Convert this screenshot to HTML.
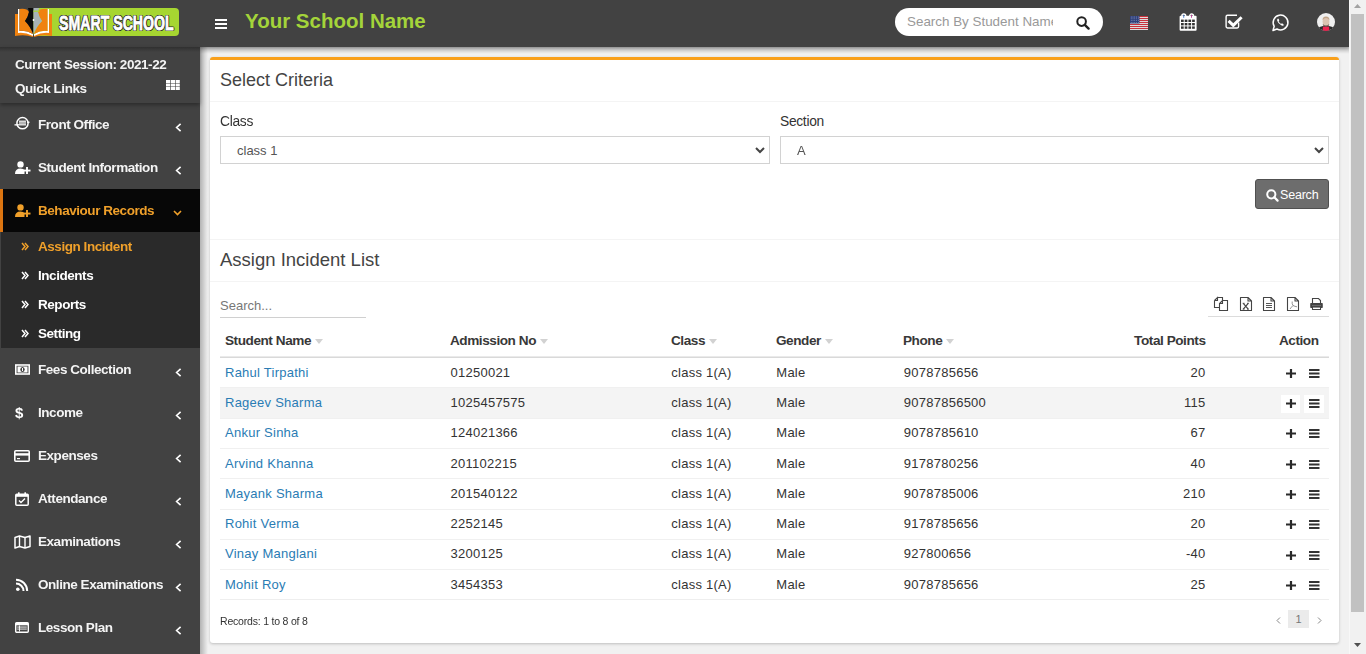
<!DOCTYPE html>
<html><head><meta charset="utf-8"><style>
*{box-sizing:border-box;margin:0;padding:0}
html,body{width:1366px;height:654px;overflow:hidden;background:#f1f1f1;font-family:"Liberation Sans",sans-serif;color:#333}
#hdr{position:absolute;left:0;top:0;width:1349px;height:47px;background:#424242;box-shadow:0 1px 4px rgba(0,0,0,.35)}
#side{position:absolute;left:0;top:47px;width:200px;height:607px;background:#424242;overflow:hidden}
#content{position:absolute;left:200px;top:47px;width:1149px;height:607px;background:#f1f1f1}
#sb{position:absolute;left:1349px;top:0;width:17px;height:654px;background:#f1f1f1}
#thumb{position:absolute;left:2px;top:14px;width:13px;height:598px;background:#c1c1c1}
.t{position:absolute;white-space:nowrap;line-height:1}
svg{position:absolute;overflow:visible}
.menu{position:absolute;left:0;width:200px;height:43px;will-change:transform}
.menu .lbl{position:absolute;left:38px;top:0;line-height:43px;font-size:13.5px;font-weight:700;color:#f4f4f4;letter-spacing:-0.45px;white-space:nowrap}
.sub{position:absolute;left:0;width:200px;height:29px;will-change:transform}
.sub .lbl{position:absolute;left:38px;top:0;line-height:29px;font-size:13.5px;font-weight:700;color:#f4f4f4;letter-spacing:-0.45px;white-space:nowrap}
#box{position:absolute;left:210px;top:57px;width:1129px;height:586px;background:#fff;border-top:3px solid #f9a01b;border-radius:3px;box-shadow:0 1px 3px rgba(0,0,0,.22)}
.hl{position:absolute;left:210px;width:1129px;height:1px;background:#f4f4f4}
.sel{position:absolute;top:136px;height:28px;border:1px solid #d2d2d2;background:#fff}
.th{position:absolute;font-size:13.6px;font-weight:700;color:#383838;letter-spacing:-0.45px;white-space:nowrap;line-height:1}
.row{position:absolute;left:220px;width:1109px;border-top:1px solid #f0f0f0}
.row.s{background:#f4f4f4}
.c{position:absolute;font-size:13px;color:#333;white-space:nowrap;line-height:1;letter-spacing:.25px}
.c.a{color:#2a7cb4}
</style></head><body>
<div id="side"></div>
<div id="content"></div>
<div style="position:absolute;left:200px;top:47px;width:1149px;height:7px;background:linear-gradient(rgba(0,0,0,.2),rgba(0,0,0,0))"></div>
<div style="position:absolute;left:200px;top:47px;width:8px;height:607px;background:linear-gradient(90deg,rgba(0,0,0,.26),rgba(0,0,0,0))"></div>
<div id="box"></div>
<div id="hdr"></div>
<div id="sb"><div id="thumb"></div></div>
<div style="position:absolute;left:33px;top:8px;width:146px;height:28px;background:#a6d631;border-radius:4px"></div>
<svg style="left:15px;top:8px" width="37" height="29" viewBox="0 0 37 29">
<path d="M0 6 L3 6 L3 24 Q10 23 18 27 L18 29 Q10 26 0 28 Z" fill="#f0820f"/>
<path d="M37 6 L34 6 L34 24 Q27 23 19 27 L19 29 Q27 26 37 28 Z" fill="#f0820f"/>
<path d="M3 1 L3 25 Q10 24 18 28 L18 26 Q11 22 4.5 23 L4.5 1 Z" fill="#fff"/>
<path d="M34 1 L34 25 Q27 24 19 28 L19 26 Q26 22 32.5 23 L32.5 1 Z" fill="#fff"/>
<path d="M4.5 1 Q12 0 14 4 Q13 9 10 13 Q15 18 18 26 Q11 22 4.5 23 Z" fill="#f0820f"/>
<path d="M32.5 1 Q25 0 23 4 Q24 9 27 13 Q22 18 19 26 Q26 22 32.5 23 Z" fill="#f0820f"/>
<path d="M13 0 L18.5 0 L18.5 26 Q15 18 10 13 Q13 9 14 4 Z" fill="#0a0a0a"/>
<path d="M18.5 0 L24 0 L23 4 Q24 9 27 13 Q22 18 18.5 26 Z" fill="#a8b2b7"/>
<rect x="18.5" y="2.6" width="6" height="1.2" fill="#a6d631"/>
<circle cx="18.5" cy="12" r="0.9" fill="#fff"/>
</svg>
<div class="t" style="left:58.5px;top:13px;font-size:20.5px;font-weight:700;color:#fff;-webkit-text-stroke:0.8px #fff;transform:scaleX(0.69);transform-origin:0 0;letter-spacing:0px;text-shadow:1.3px 0 0 #2a2a2a,-1.3px 0 0 #2a2a2a,0 1.3px 0 #2a2a2a,0 -1.3px 0 #2a2a2a,1px 1px 0 #2a2a2a,-1px -1px 0 #2a2a2a,1px -1px 0 #2a2a2a,-1px 1px 0 #2a2a2a">SMART SCHOOL</div>
<div style="position:absolute;left:215px;top:18.5px;width:12px;height:2px;background:#fff"></div>
<div style="position:absolute;left:215px;top:22.5px;width:12px;height:2px;background:#fff"></div>
<div style="position:absolute;left:215px;top:26.5px;width:12px;height:2px;background:#fff"></div>
<div class="t" style="left:245px;top:11.05px;font-size:20.5px;color:#a4d43a;font-weight:700;letter-spacing:0px;">Your School Name</div>
<div style="position:absolute;left:895px;top:8px;width:208px;height:28px;background:#fff;border-radius:14px"></div>
<div style="position:absolute;left:907px;top:12px;width:146px;height:20px;overflow:hidden"><div class="t" style="left:0;top:3.46px;font-size:13.4px;color:#999">Search By Student Name</div></div>
<svg style="left:1076px;top:16px" width="14" height="14" viewBox="0 0 14 14"><circle cx="5.6" cy="5.6" r="4.3" fill="none" stroke="#222" stroke-width="2"/><path d="M8.8 8.8 L12.6 12.6" stroke="#222" stroke-width="2.4" stroke-linecap="round"/></svg>
<svg style="left:1130px;top:16px" width="18" height="14" viewBox="0 0 18 14"><rect x="0" y="0" width="18" height="1.1" fill="#c8323c"/><rect x="0" y="1.1" width="18" height="0.9" fill="#eee"/><rect x="0" y="2" width="18" height="1.1" fill="#c8323c"/><rect x="0" y="3.1" width="18" height="0.9" fill="#eee"/><rect x="0" y="4" width="18" height="1.1" fill="#c8323c"/><rect x="0" y="5.1" width="18" height="0.9" fill="#eee"/><rect x="0" y="6" width="18" height="1.1" fill="#c8323c"/><rect x="0" y="7.1" width="18" height="0.9" fill="#eee"/><rect x="0" y="8" width="18" height="1.1" fill="#c8323c"/><rect x="0" y="9.1" width="18" height="0.9" fill="#eee"/><rect x="0" y="10" width="18" height="1.1" fill="#c8323c"/><rect x="0" y="11.1" width="18" height="0.9" fill="#eee"/><rect x="0" y="12" width="18" height="1.1" fill="#c8323c"/><rect x="0" y="13.1" width="18" height="0.9" fill="#eee"/><rect x="0" y="0" width="9.5" height="7.5" fill="#2e3f7a"/><circle cx="1.2" cy="1.0" r="0.4" fill="#c9d0e6"/><circle cx="3.0" cy="1.0" r="0.4" fill="#c9d0e6"/><circle cx="4.8" cy="1.0" r="0.4" fill="#c9d0e6"/><circle cx="6.6000000000000005" cy="1.0" r="0.4" fill="#c9d0e6"/><circle cx="8.4" cy="1.0" r="0.4" fill="#c9d0e6"/><circle cx="1.2" cy="2.8" r="0.4" fill="#c9d0e6"/><circle cx="3.0" cy="2.8" r="0.4" fill="#c9d0e6"/><circle cx="4.8" cy="2.8" r="0.4" fill="#c9d0e6"/><circle cx="6.6000000000000005" cy="2.8" r="0.4" fill="#c9d0e6"/><circle cx="8.4" cy="2.8" r="0.4" fill="#c9d0e6"/><circle cx="1.2" cy="4.6" r="0.4" fill="#c9d0e6"/><circle cx="3.0" cy="4.6" r="0.4" fill="#c9d0e6"/><circle cx="4.8" cy="4.6" r="0.4" fill="#c9d0e6"/><circle cx="6.6000000000000005" cy="4.6" r="0.4" fill="#c9d0e6"/><circle cx="8.4" cy="4.6" r="0.4" fill="#c9d0e6"/><circle cx="1.2" cy="6.4" r="0.4" fill="#c9d0e6"/><circle cx="3.0" cy="6.4" r="0.4" fill="#c9d0e6"/><circle cx="4.8" cy="6.4" r="0.4" fill="#c9d0e6"/><circle cx="6.6000000000000005" cy="6.4" r="0.4" fill="#c9d0e6"/><circle cx="8.4" cy="6.4" r="0.4" fill="#c9d0e6"/></svg>
<svg style="left:1179px;top:13px" width="18" height="18" viewBox="0 0 18 18"><rect x="0.6" y="2.8" width="17" height="15" rx="1" fill="#fff"/><path d="M2.8 3.2 A2 2.2 0 0 1 6.8 3.2 M10.6 3.2 A2 2.2 0 0 1 14.6 3.2" fill="none" stroke="#fff" stroke-width="1.3"/><rect x="4.3" y="1.8" width="0.9" height="3" fill="#3b74c9"/><rect x="12.1" y="1.8" width="0.9" height="3" fill="#c0399a"/><rect x="2.0" y="6.6" width="2.7" height="2.4" fill="#333"/><rect x="5.7" y="6.6" width="2.7" height="2.4" fill="#333"/><rect x="9.4" y="6.6" width="2.7" height="2.4" fill="#333"/><rect x="13.100000000000001" y="6.6" width="2.7" height="2.4" fill="#333"/><rect x="2.0" y="10.0" width="2.7" height="2.4" fill="#333"/><rect x="5.7" y="10.0" width="2.7" height="2.4" fill="#333"/><rect x="9.4" y="10.0" width="2.7" height="2.4" fill="#333"/><rect x="13.100000000000001" y="10.0" width="2.7" height="2.4" fill="#333"/><rect x="2.0" y="13.399999999999999" width="2.7" height="2.4" fill="#333"/><rect x="5.7" y="13.399999999999999" width="2.7" height="2.4" fill="#333"/><rect x="9.4" y="13.399999999999999" width="2.7" height="2.4" fill="#333"/><rect x="13.100000000000001" y="13.399999999999999" width="2.7" height="2.4" fill="#333"/></svg>
<svg style="left:1225px;top:14px" width="19" height="15" viewBox="0 0 19 15"><path d="M12 1.3 H2.5 Q1.1 1.3 1.1 2.7 V12.6 Q1.1 14 2.5 14 H12.2 Q13.6 14 13.6 12.6 V8.5" fill="none" stroke="#fff" stroke-width="1.4"/><path d="M3.6 6.8 L8.3 11.3 L16.6 3.2" fill="none" stroke="#fff" stroke-width="3"/></svg>
<svg style="left:1272px;top:14px" width="17" height="17" viewBox="0 0 17 17"><path d="M1 16.5 L2.2 12.3 A7.4 7.4 0 1 1 5 15 Z" fill="none" stroke="#fff" stroke-width="1.5" stroke-linejoin="round"/><path d="M5.6 4.8 Q5 5.3 5.2 6.8 Q6 9.8 9.6 11.6 Q11 12 11.7 11.2 L11.3 9.9 L9.8 9.3 L9.1 10 Q7.3 9 6.6 7.3 L7.3 6.5 L6.6 4.8 Z" fill="#fff"/></svg>
<svg style="left:1317px;top:13px" width="18" height="18" viewBox="0 0 18 18"><defs><clipPath id="av"><circle cx="9" cy="9" r="9"/></clipPath></defs><g clip-path="url(#av)"><rect width="18" height="18" fill="#efefef"/><path d="M0 18 L0 16 Q2 13.5 6 13 L12 13 Q16 13.5 18 16 L18 18 Z" fill="#2a2a2a"/><path d="M5.5 18 L6 13.6 L12 13.6 L12.5 18 Z" fill="#ee2350"/><ellipse cx="9" cy="8.6" rx="3.4" ry="4.6" fill="#dcc3b2"/><path d="M5.8 11 Q9 14.2 12.2 11 L12 12.6 Q9 14.8 6 12.6 Z" fill="#6a5a50"/><path d="M5.6 7 Q5.4 3.6 9 3.4 Q12.6 3.6 12.4 7 Q11 5 9 5 Q7 5 5.6 7 Z" fill="#c0a488"/></g></svg>
<div style="position:absolute;left:0;top:47px;width:200px;height:56px;background:#424242;box-shadow:0 2px 4px rgba(0,0,0,.35)"></div>
<div class="t" style="left:15px;top:57.87px;font-size:13.5px;color:#f4f4f4;font-weight:700;letter-spacing:-0.45px;will-change:transform">Current Session: 2021-22</div>
<div class="t" style="left:15px;top:81.67px;font-size:13.5px;color:#f4f4f4;font-weight:700;letter-spacing:-0.45px;will-change:transform">Quick Links</div>
<svg style="left:166px;top:80px" width="14" height="10" viewBox="0 0 14 10"><rect x="0.0" y="0.0" width="4.2" height="3" fill="#fff"/><rect x="4.8" y="0.0" width="4.2" height="3" fill="#fff"/><rect x="9.6" y="0.0" width="4.2" height="3" fill="#fff"/><rect x="0.0" y="3.5" width="4.2" height="3" fill="#fff"/><rect x="4.8" y="3.5" width="4.2" height="3" fill="#fff"/><rect x="9.6" y="3.5" width="4.2" height="3" fill="#fff"/><rect x="0.0" y="7.0" width="4.2" height="3" fill="#fff"/><rect x="4.8" y="7.0" width="4.2" height="3" fill="#fff"/><rect x="9.6" y="7.0" width="4.2" height="3" fill="#fff"/></svg>
<svg style="left:14px;top:116.3px" width="16" height="14" viewBox="0 0 16 14"><circle cx="8.5" cy="7.2" r="5.6" fill="none" stroke="#fff" stroke-width="1.5"/><rect x="5" y="4.6" width="7" height="1.2" fill="#fff"/><rect x="5" y="6.4" width="7" height="1.2" fill="#fff"/><rect x="4" y="8.2" width="8" height="1.2" fill="#fff"/><rect x="0.5" y="8.2" width="3.5" height="1.3" fill="#fff"/><rect x="13" y="5.6" width="2.5" height="1.3" fill="#fff"/></svg>
<div class="menu" style="top:103px"><div class="lbl">Front Office</div></div>
<svg style="left:175px;top:123px" width="7" height="9" viewBox="0 0 7 9"><path d="M5.6 0.8 L1.6 4.5 L5.6 8.2" fill="none" stroke="#fff" stroke-width="1.6"/></svg>
<svg style="left:15px;top:161.0px" width="16" height="13" viewBox="0 0 16 13"><circle cx="5.5" cy="3.4" r="3.2" fill="#fff"/><path d="M0 13 Q0 7.5 5.5 7.5 Q8.5 7.5 9.5 9 L9.5 13 Z" fill="#fff"/><rect x="8.5" y="8.6" width="7" height="1.9" fill="#fff"/><rect x="11.05" y="6" width="1.9" height="7" fill="#fff"/></svg>
<div class="menu" style="top:146px"><div class="lbl">Student Information</div></div>
<svg style="left:175px;top:166px" width="7" height="9" viewBox="0 0 7 9"><path d="M5.6 0.8 L1.6 4.5 L5.6 8.2" fill="none" stroke="#fff" stroke-width="1.6"/></svg>
<div class="menu" style="top:189px;background:#070707;border-left:3px solid #dc7511"></div>
<svg style="left:15px;top:204.0px" width="16" height="13" viewBox="0 0 16 13"><circle cx="5.5" cy="3.4" r="3.2" fill="#f0a02a"/><path d="M0 13 Q0 7.5 5.5 7.5 Q8.5 7.5 9.5 9 L9.5 13 Z" fill="#f0a02a"/><rect x="8.5" y="8.6" width="7" height="1.9" fill="#f0a02a"/><rect x="11.05" y="6" width="1.9" height="7" fill="#f0a02a"/></svg>
<div class="menu" style="top:189px"><div class="lbl" style="color:#f0a02a">Behaviour Records</div></div>
<svg style="left:173px;top:210px" width="9" height="6" viewBox="0 0 9 6"><path d="M1 1 L4.5 4.5 L8 1" fill="none" stroke="#f0a02a" stroke-width="1.6"/></svg>
<svg style="left:15px;top:364.0px" width="15" height="11" viewBox="0 0 15 11"><rect x="0.8" y="1" width="13.4" height="9" fill="none" stroke="#fff" stroke-width="1.6"/><rect x="2.5" y="2.5" width="10" height="6" fill="#fff"/><ellipse cx="7.5" cy="5.5" rx="2.2" ry="2.6" fill="#424242"/><rect x="7" y="4" width="1" height="3" fill="#fff"/></svg>
<div class="menu" style="top:348px"><div class="lbl">Fees Collection</div></div>
<svg style="left:175px;top:368px" width="7" height="9" viewBox="0 0 7 9"><path d="M5.6 0.8 L1.6 4.5 L5.6 8.2" fill="none" stroke="#fff" stroke-width="1.6"/></svg>
<div class="t" style="left:15px;top:405.0px;font-size:15px;font-weight:700;color:#fff">$</div>
<div class="menu" style="top:391px"><div class="lbl">Income</div></div>
<svg style="left:175px;top:411px" width="7" height="9" viewBox="0 0 7 9"><path d="M5.6 0.8 L1.6 4.5 L5.6 8.2" fill="none" stroke="#fff" stroke-width="1.6"/></svg>
<svg style="left:14px;top:449.5px" width="16" height="12" viewBox="0 0 16 12"><rect x="0.8" y="0.8" width="14.4" height="10.4" rx="1" fill="none" stroke="#fff" stroke-width="1.6"/><rect x="0.8" y="3.2" width="14.4" height="2.4" fill="#fff"/><rect x="3" y="8" width="3" height="1.2" fill="#fff"/></svg>
<div class="menu" style="top:434px"><div class="lbl">Expenses</div></div>
<svg style="left:175px;top:454px" width="7" height="9" viewBox="0 0 7 9"><path d="M5.6 0.8 L1.6 4.5 L5.6 8.2" fill="none" stroke="#fff" stroke-width="1.6"/></svg>
<svg style="left:15px;top:491.5px" width="14" height="14" viewBox="0 0 14 14"><rect x="0.8" y="2.2" width="12.4" height="11" rx="1" fill="none" stroke="#fff" stroke-width="1.5"/><rect x="0.8" y="2.2" width="12.4" height="2.6" fill="#fff"/><rect x="3" y="0.3" width="1.6" height="3" fill="#fff"/><rect x="9.4" y="0.3" width="1.6" height="3" fill="#fff"/><path d="M4 8.5 L6 10.5 L10 6.5" fill="none" stroke="#fff" stroke-width="1.4"/></svg>
<div class="menu" style="top:477px"><div class="lbl">Attendance</div></div>
<svg style="left:175px;top:497px" width="7" height="9" viewBox="0 0 7 9"><path d="M5.6 0.8 L1.6 4.5 L5.6 8.2" fill="none" stroke="#fff" stroke-width="1.6"/></svg>
<svg style="left:14px;top:534.5px" width="17" height="14" viewBox="0 0 17 14"><path d="M1 2.5 L5.5 1 L11 2.5 L16 1 L16 11.5 L11 13 L5.5 11.5 L1 13 Z" fill="none" stroke="#fff" stroke-width="1.5" stroke-linejoin="round"/><path d="M5.5 1 L5.5 11.5 M11 2.5 L11 13" stroke="#fff" stroke-width="1.4"/></svg>
<div class="menu" style="top:520px"><div class="lbl">Examinations</div></div>
<svg style="left:175px;top:540px" width="7" height="9" viewBox="0 0 7 9"><path d="M5.6 0.8 L1.6 4.5 L5.6 8.2" fill="none" stroke="#fff" stroke-width="1.6"/></svg>
<svg style="left:16px;top:578.5px" width="12" height="12" viewBox="0 0 12 12"><circle cx="1.8" cy="10.2" r="1.8" fill="#fff"/><path d="M0 4.5 A7.5 7.5 0 0 1 7.5 12" fill="none" stroke="#fff" stroke-width="2"/><path d="M0 0.8 A11.2 11.2 0 0 1 11.2 12" fill="none" stroke="#fff" stroke-width="2"/></svg>
<div class="menu" style="top:563px"><div class="lbl">Online Examinations</div></div>
<svg style="left:175px;top:583px" width="7" height="9" viewBox="0 0 7 9"><path d="M5.6 0.8 L1.6 4.5 L5.6 8.2" fill="none" stroke="#fff" stroke-width="1.6"/></svg>
<svg style="left:14.5px;top:621.5px" width="14" height="11" viewBox="0 0 14 11"><rect x="0.7" y="0.7" width="12.6" height="9.6" rx="1" fill="none" stroke="#fff" stroke-width="1.4"/><rect x="0.7" y="0.7" width="12.6" height="2.6" fill="#fff"/><rect x="2.2" y="4.6" width="9.6" height="0.9" fill="#fff"/><rect x="2.2" y="6.6" width="9.6" height="0.9" fill="#fff"/><rect x="4" y="3.5" width="0.9" height="6" fill="#fff"/></svg>
<div class="menu" style="top:606px"><div class="lbl">Lesson Plan</div></div>
<svg style="left:175px;top:626px" width="7" height="9" viewBox="0 0 7 9"><path d="M5.6 0.8 L1.6 4.5 L5.6 8.2" fill="none" stroke="#fff" stroke-width="1.6"/></svg>

<div class="menu" style="top:649px"><div class="lbl">Academics</div></div>
<svg style="left:175px;top:669px" width="7" height="9" viewBox="0 0 7 9"><path d="M5.6 0.8 L1.6 4.5 L5.6 8.2" fill="none" stroke="#fff" stroke-width="1.6"/></svg>
<div style="position:absolute;left:1px;top:232px;width:199px;height:116px;background:#2a2a2a"></div>
<svg style="left:21px;top:242px" width="8" height="9" viewBox="0 0 8 9"><path d="M1 1 L4 4.5 L1 8 M4 1 L7 4.5 L4 8" fill="none" stroke="#f0a02a" stroke-width="1.5"/></svg>
<div class="sub" style="top:232px"><div class="lbl" style="color:#f0a02a">Assign Incident</div></div>
<svg style="left:21px;top:271px" width="8" height="9" viewBox="0 0 8 9"><path d="M1 1 L4 4.5 L1 8 M4 1 L7 4.5 L4 8" fill="none" stroke="#fff" stroke-width="1.5"/></svg>
<div class="sub" style="top:261px"><div class="lbl" style="color:#fff">Incidents</div></div>
<svg style="left:21px;top:300px" width="8" height="9" viewBox="0 0 8 9"><path d="M1 1 L4 4.5 L1 8 M4 1 L7 4.5 L4 8" fill="none" stroke="#fff" stroke-width="1.5"/></svg>
<div class="sub" style="top:290px"><div class="lbl" style="color:#fff">Reports</div></div>
<svg style="left:21px;top:329px" width="8" height="9" viewBox="0 0 8 9"><path d="M1 1 L4 4.5 L1 8 M4 1 L7 4.5 L4 8" fill="none" stroke="#fff" stroke-width="1.5"/></svg>
<div class="sub" style="top:319px"><div class="lbl" style="color:#fff">Setting</div></div>
<div class="t" style="left:220px;top:70.96px;font-size:18px;color:#444;font-weight:400;letter-spacing:0px;">Select Criteria</div>
<div class="hl" style="top:101px"></div>
<div class="t" style="left:220px;top:114.52px;font-size:13.8px;color:#333;font-weight:400;letter-spacing:-0.3px;">Class</div>
<div class="t" style="left:780px;top:114.52px;font-size:13.8px;color:#333;font-weight:400;letter-spacing:-0.3px;">Section</div>
<div class="sel" style="left:220px;width:550px"></div>
<div class="sel" style="left:780px;width:549px"></div>
<div class="t" style="left:237px;top:144.00px;font-size:13px;color:#555;font-weight:400;letter-spacing:0px;">class 1</div>
<div class="t" style="left:797px;top:144.00px;font-size:13px;color:#555;font-weight:400;letter-spacing:0px;">A</div>
<svg style="left:755px;top:147px" width="10" height="7" viewBox="0 0 10 7"><path d="M1 1 L5 5 L9 1" fill="none" stroke="#444" stroke-width="2"/></svg>
<svg style="left:1314px;top:147px" width="10" height="7" viewBox="0 0 10 7"><path d="M1 1 L5 5 L9 1" fill="none" stroke="#444" stroke-width="2"/></svg>
<div style="position:absolute;left:1255px;top:179px;width:74px;height:30px;background:#6d6d6d;border:1px solid #505050;border-radius:3px"></div>
<svg style="left:1266px;top:188.5px" width="13" height="13" viewBox="0 0 13 13"><circle cx="5.3" cy="5.3" r="4.1" fill="none" stroke="#fff" stroke-width="2"/><path d="M8.3 8.3 L11.6 11.6" stroke="#fff" stroke-width="2.2" stroke-linecap="round"/></svg>
<div class="t" style="left:1280px;top:188.72px;font-size:12.5px;color:#fff;font-weight:400;letter-spacing:-0.2px;">Search</div>
<div class="hl" style="top:239px"></div>
<div class="t" style="left:220px;top:251.24px;font-size:18.5px;color:#444;font-weight:400;letter-spacing:0px;">Assign Incident List</div>
<div class="hl" style="top:281px"></div>
<div class="t" style="left:220px;top:298.90px;font-size:13px;color:#777;font-weight:400;letter-spacing:0px;">Search...</div>
<div style="position:absolute;left:220px;top:317px;width:146px;height:1px;background:#d0d0d0"></div>
<div style="position:absolute;left:1208px;top:316px;width:121px;height:1px;background:#dcdcdc"></div>
<svg style="left:1214px;top:297px" width="15" height="14" viewBox="0 0 15 14"><path d="M3.5 0.5 H8.5 V3.2 M0.5 3.5 V10.5 H5 M0.5 3.5 L3.5 0.5 V3.5 H0.5" fill="none" stroke="#444" stroke-width="1.1"/><path d="M8.5 3.5 H13.5 V13.5 H5.5 V6.5 L8.5 3.5 V6.5 H5.5" fill="none" stroke="#444" stroke-width="1.1"/></svg>
<svg style="left:1240px;top:297px" width="13" height="14" viewBox="0 0 13 14"><path d="M0.5 0.5 H8 L11.5 4 V13.5 H0.5 Z M8 0.5 V4 H11.5" fill="none" stroke="#444" stroke-width="1.1" stroke-linejoin="round"/><path d="M3.3 6.3 L8.2 12.2 M8.2 6.3 L3.3 12.2" stroke="#444" stroke-width="1.2"/><path d="M2.6 6.3 H4.6 M7 6.3 H9 M2.6 12.2 H4.6 M7 12.2 H9" stroke="#444" stroke-width="0.8"/></svg>
<svg style="left:1263px;top:297px" width="13" height="14" viewBox="0 0 13 14"><path d="M0.5 0.5 H8 L11.5 4 V13.5 H0.5 Z M8 0.5 V4 H11.5" fill="none" stroke="#444" stroke-width="1.1" stroke-linejoin="round"/><path d="M3 6.5 H9 M3 8.5 H9 M3 10.5 H9" stroke="#444" stroke-width="0.9"/></svg>
<svg style="left:1286.5px;top:297px" width="13" height="14" viewBox="0 0 13 14"><path d="M0.5 0.5 H8 L11.5 4 V13.5 H0.5 Z M8 0.5 V4 H11.5" fill="none" stroke="#444" stroke-width="1.1" stroke-linejoin="round"/><path d="M5.2 4.5 Q4.8 7 6 8.5 Q4.5 10 3 12 M6 8.5 Q8 9.5 10 9.8" fill="none" stroke="#777" stroke-width="0.8"/></svg>
<svg style="left:1310px;top:297px" width="14" height="14" viewBox="0 0 14 14"><path d="M2.5 6 V1.5 H8.5 L10.5 3.5 V6" fill="none" stroke="#444" stroke-width="1.1"/><rect x="0.2" y="6" width="12.6" height="5" rx="0.8" fill="#444"/><rect x="2" y="8.2" width="9" height="0.8" fill="#777"/><path d="M2.5 10 V12.5 H10.5 V10" fill="none" stroke="#444" stroke-width="1.1"/><rect x="3" y="10.6" width="7" height="1.4" fill="#fff"/></svg>
<div class="th" style="left:225px;top:334.49px">Student Name<span style="display:inline-block;width:0;height:0;border-left:4.5px solid transparent;border-right:4.5px solid transparent;border-top:5px solid #d2d2d2;margin-left:4px;vertical-align:1px"></span></div>
<div class="th" style="left:450px;top:334.49px">Admission No<span style="display:inline-block;width:0;height:0;border-left:4.5px solid transparent;border-right:4.5px solid transparent;border-top:5px solid #d2d2d2;margin-left:4px;vertical-align:1px"></span></div>
<div class="th" style="left:671px;top:334.49px">Class<span style="display:inline-block;width:0;height:0;border-left:4.5px solid transparent;border-right:4.5px solid transparent;border-top:5px solid #d2d2d2;margin-left:4px;vertical-align:1px"></span></div>
<div class="th" style="left:776px;top:334.49px">Gender<span style="display:inline-block;width:0;height:0;border-left:4.5px solid transparent;border-right:4.5px solid transparent;border-top:5px solid #d2d2d2;margin-left:4px;vertical-align:1px"></span></div>
<div class="th" style="left:903px;top:334.49px">Phone<span style="display:inline-block;width:0;height:0;border-left:4.5px solid transparent;border-right:4.5px solid transparent;border-top:5px solid #d2d2d2;margin-left:4px;vertical-align:1px"></span></div>
<div class="th" style="right:160.5px;top:334.49px">Total Points</div>
<div class="th" style="right:47.5px;top:334.49px">Action</div>
<div style="position:absolute;left:220px;top:356px;width:1109px;height:1px;background:#eaeaea"></div><div style="position:absolute;left:220px;top:357px;width:1109px;height:1px;background:#d9d9d9"></div>
<div class="row" style="top:357.000px;height:30.3px;border-top:none;"></div>
<div class="c a" style="left:225px;top:365.60px">Rahul Tirpathi</div>
<div class="c" style="left:450.5px;top:365.60px">01250021</div>
<div class="c" style="left:671.3px;top:365.60px">class 1(A)</div>
<div class="c" style="left:776.3px;top:365.60px">Male</div>
<div class="c" style="left:903.8px;top:365.60px">9078785656</div>
<div class="c" style="right:160.5px;top:365.60px">20</div>
<svg style="left:1286px;top:368.70px" width="10" height="9" viewBox="0 0 10 9"><path d="M0 4.5 L10 4.5 M5 0 L5 9" stroke="#2a2a2a" stroke-width="2.2"/></svg>
<svg style="left:1309px;top:368.70px" width="11" height="9" viewBox="0 0 11 9"><path d="M0 1 L10.5 1 M0 4.5 L10.5 4.5 M0 8 L10.5 8" stroke="#333" stroke-width="2"/></svg>
<div class="row s" style="top:387.300px;height:30.3px;"></div>
<div class="c a" style="left:225px;top:395.90px">Rageev Sharma</div>
<div class="c" style="left:450.5px;top:395.90px">1025457575</div>
<div class="c" style="left:671.3px;top:395.90px">class 1(A)</div>
<div class="c" style="left:776.3px;top:395.90px">Male</div>
<div class="c" style="left:903.8px;top:395.90px">90787856500</div>
<div class="c" style="right:160.5px;top:395.90px">115</div>
<div style="position:absolute;left:1281px;top:395.10px;width:19px;height:18px;background:#fff"></div>
<div style="position:absolute;left:1304px;top:395.10px;width:20px;height:18px;background:#fff"></div>
<svg style="left:1286px;top:399.00px" width="10" height="9" viewBox="0 0 10 9"><path d="M0 4.5 L10 4.5 M5 0 L5 9" stroke="#2a2a2a" stroke-width="2.2"/></svg>
<svg style="left:1309px;top:399.00px" width="11" height="9" viewBox="0 0 11 9"><path d="M0 1 L10.5 1 M0 4.5 L10.5 4.5 M0 8 L10.5 8" stroke="#333" stroke-width="2"/></svg>
<div class="row" style="top:417.600px;height:30.3px;"></div>
<div class="c a" style="left:225px;top:426.20px">Ankur Sinha</div>
<div class="c" style="left:450.5px;top:426.20px">124021366</div>
<div class="c" style="left:671.3px;top:426.20px">class 1(A)</div>
<div class="c" style="left:776.3px;top:426.20px">Male</div>
<div class="c" style="left:903.8px;top:426.20px">9078785610</div>
<div class="c" style="right:160.5px;top:426.20px">67</div>
<svg style="left:1286px;top:429.30px" width="10" height="9" viewBox="0 0 10 9"><path d="M0 4.5 L10 4.5 M5 0 L5 9" stroke="#2a2a2a" stroke-width="2.2"/></svg>
<svg style="left:1309px;top:429.30px" width="11" height="9" viewBox="0 0 11 9"><path d="M0 1 L10.5 1 M0 4.5 L10.5 4.5 M0 8 L10.5 8" stroke="#333" stroke-width="2"/></svg>
<div class="row" style="top:447.900px;height:30.3px;"></div>
<div class="c a" style="left:225px;top:456.50px">Arvind Khanna</div>
<div class="c" style="left:450.5px;top:456.50px">201102215</div>
<div class="c" style="left:671.3px;top:456.50px">class 1(A)</div>
<div class="c" style="left:776.3px;top:456.50px">Male</div>
<div class="c" style="left:903.8px;top:456.50px">9178780256</div>
<div class="c" style="right:160.5px;top:456.50px">40</div>
<svg style="left:1286px;top:459.60px" width="10" height="9" viewBox="0 0 10 9"><path d="M0 4.5 L10 4.5 M5 0 L5 9" stroke="#2a2a2a" stroke-width="2.2"/></svg>
<svg style="left:1309px;top:459.60px" width="11" height="9" viewBox="0 0 11 9"><path d="M0 1 L10.5 1 M0 4.5 L10.5 4.5 M0 8 L10.5 8" stroke="#333" stroke-width="2"/></svg>
<div class="row" style="top:478.200px;height:30.3px;"></div>
<div class="c a" style="left:225px;top:486.80px">Mayank Sharma</div>
<div class="c" style="left:450.5px;top:486.80px">201540122</div>
<div class="c" style="left:671.3px;top:486.80px">class 1(A)</div>
<div class="c" style="left:776.3px;top:486.80px">Male</div>
<div class="c" style="left:903.8px;top:486.80px">9078785006</div>
<div class="c" style="right:160.5px;top:486.80px">210</div>
<svg style="left:1286px;top:489.90px" width="10" height="9" viewBox="0 0 10 9"><path d="M0 4.5 L10 4.5 M5 0 L5 9" stroke="#2a2a2a" stroke-width="2.2"/></svg>
<svg style="left:1309px;top:489.90px" width="11" height="9" viewBox="0 0 11 9"><path d="M0 1 L10.5 1 M0 4.5 L10.5 4.5 M0 8 L10.5 8" stroke="#333" stroke-width="2"/></svg>
<div class="row" style="top:508.500px;height:30.3px;"></div>
<div class="c a" style="left:225px;top:517.10px">Rohit Verma</div>
<div class="c" style="left:450.5px;top:517.10px">2252145</div>
<div class="c" style="left:671.3px;top:517.10px">class 1(A)</div>
<div class="c" style="left:776.3px;top:517.10px">Male</div>
<div class="c" style="left:903.8px;top:517.10px">9178785656</div>
<div class="c" style="right:160.5px;top:517.10px">20</div>
<svg style="left:1286px;top:520.20px" width="10" height="9" viewBox="0 0 10 9"><path d="M0 4.5 L10 4.5 M5 0 L5 9" stroke="#2a2a2a" stroke-width="2.2"/></svg>
<svg style="left:1309px;top:520.20px" width="11" height="9" viewBox="0 0 11 9"><path d="M0 1 L10.5 1 M0 4.5 L10.5 4.5 M0 8 L10.5 8" stroke="#333" stroke-width="2"/></svg>
<div class="row" style="top:538.800px;height:30.3px;"></div>
<div class="c a" style="left:225px;top:547.40px">Vinay Manglani</div>
<div class="c" style="left:450.5px;top:547.40px">3200125</div>
<div class="c" style="left:671.3px;top:547.40px">class 1(A)</div>
<div class="c" style="left:776.3px;top:547.40px">Male</div>
<div class="c" style="left:903.8px;top:547.40px">927800656</div>
<div class="c" style="right:160.5px;top:547.40px">-40</div>
<svg style="left:1286px;top:550.50px" width="10" height="9" viewBox="0 0 10 9"><path d="M0 4.5 L10 4.5 M5 0 L5 9" stroke="#2a2a2a" stroke-width="2.2"/></svg>
<svg style="left:1309px;top:550.50px" width="11" height="9" viewBox="0 0 11 9"><path d="M0 1 L10.5 1 M0 4.5 L10.5 4.5 M0 8 L10.5 8" stroke="#333" stroke-width="2"/></svg>
<div class="row" style="top:569.100px;height:30.3px;"></div>
<div class="c a" style="left:225px;top:577.70px">Mohit Roy</div>
<div class="c" style="left:450.5px;top:577.70px">3454353</div>
<div class="c" style="left:671.3px;top:577.70px">class 1(A)</div>
<div class="c" style="left:776.3px;top:577.70px">Male</div>
<div class="c" style="left:903.8px;top:577.70px">9078785656</div>
<div class="c" style="right:160.5px;top:577.70px">25</div>
<svg style="left:1286px;top:580.80px" width="10" height="9" viewBox="0 0 10 9"><path d="M0 4.5 L10 4.5 M5 0 L5 9" stroke="#2a2a2a" stroke-width="2.2"/></svg>
<svg style="left:1309px;top:580.80px" width="11" height="9" viewBox="0 0 11 9"><path d="M0 1 L10.5 1 M0 4.5 L10.5 4.5 M0 8 L10.5 8" stroke="#333" stroke-width="2"/></svg>
<div style="position:absolute;left:220px;top:599px;width:1109px;height:1px;background:#eee"></div>
<div class="t" style="left:220px;top:616.11px;font-size:10.5px;color:#333;font-weight:400;letter-spacing:-0.2px;">Records: 1 to 8 of 8</div>
<div style="position:absolute;left:1288px;top:610px;width:21px;height:18px;background:#ebebeb"></div>
<div class="t" style="left:1295.5px;top:614.19px;font-size:11px;color:#777;font-weight:400;letter-spacing:0px;">1</div>
<svg style="left:1276px;top:616.5px" width="5" height="7" viewBox="0 0 5 7"><path d="M4 0.5 L1 3.5 L4 6.5" fill="none" stroke="#888" stroke-width="1"/></svg>
<svg style="left:1316.5px;top:616.5px" width="5" height="7" viewBox="0 0 5 7"><path d="M1 0.5 L4 3.5 L1 6.5" fill="none" stroke="#888" stroke-width="1"/></svg>
<svg style="left:1354px;top:4px" width="7" height="4" viewBox="0 0 7 4"><path d="M0 4 L3.5 0 L7 4 Z" fill="#a3a3a3"/></svg>
<div style="position:absolute;left:1349px;top:0;width:1px;height:654px;background:#f8f8f8"></div>
<svg style="left:1354px;top:643px" width="7" height="4" viewBox="0 0 7 4"><path d="M0 0 L3.5 4 L7 0 Z" fill="#505050"/></svg>
<div style="position:absolute;left:0;top:47px;width:200px;height:5px;background:linear-gradient(rgba(0,0,0,.28),rgba(0,0,0,0))"></div>
</body></html>
